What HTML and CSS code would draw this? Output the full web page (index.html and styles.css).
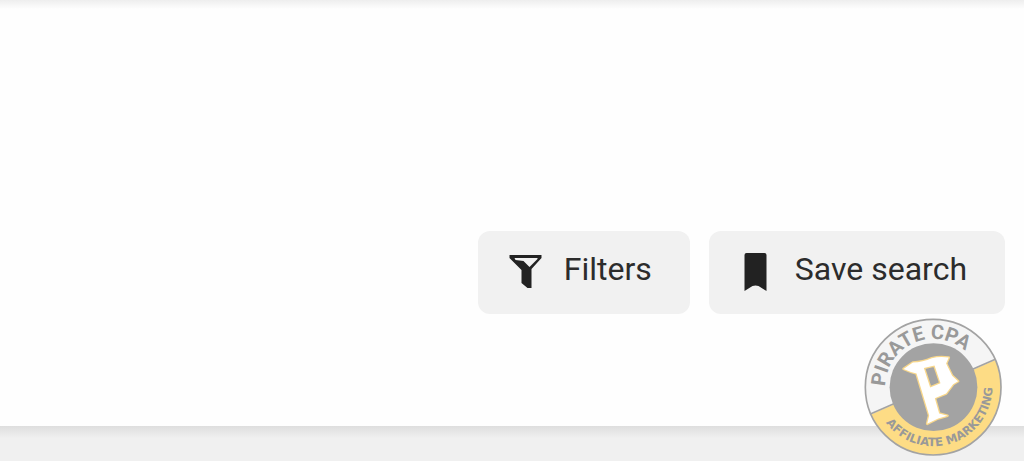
FILE: index.html
```
<!DOCTYPE html>
<html lang="en-US">
  <head>
    <meta charset="utf-8">
    <title>Search</title>
    <link rel="stylesheet" href="styles.css">
  </head>
  <body>
    <main class="toolbar">
      <button type="button" class="btn">
        <svg class="icon" viewBox="0 0 40 40" aria-hidden="true">
          <path fill-rule="evenodd" d="M3 4h32v3L25 18v19h-4l-6-5V19L3 7zM8 7l1 2 8 1 6 6 8-8V7z"/>
        </svg>
        <span>Filters</span>
      </button>
      <button type="button" class="btn">
        <svg class="icon" viewBox="0 0 40 40" aria-hidden="true">
          <path d="M9 2h18q2 0 2 2v36l-8-5q-3-1-6 0l-8 5V4q0-2 2-2z"/>
        </svg>
        <span>Save search</span>
      </button>
    </main>
    <footer class="strip"></footer>

    <svg class="logo" viewBox="13 17 415 415" role="img" aria-label="Pirate CPA Affiliate Marketing">
      <defs>
        <path id="arc-top" d="M77 237a145 145 0 1 1 289 0"/>
        <path id="arc-bottom" d="M54 163A178 178 0 1 0 388 163"/>
      </defs>
      <circle class="logo-ring" cx="221" cy="225" r="204"/>
      <path class="logo-gold" d="M34 307A204 204 0 0 0 408 143z"/>
      <path class="logo-line" d="M34 305L408 141"/>
      <circle class="logo-edge" cx="221" cy="225" r="204"/>
      <circle class="logo-disc" cx="222" cy="225" r="132"/>
      <path class="logo-letter" d="M132 170L160 151Q190 150 217 138Q240 132 268 136L260 154L278 191L296 207L281 216L260 244L226 258L239 304L264 311L236 319L203 335L209 310L171 184Q154 180 132 170zM193 167L212 226L243 213L225 160z"/>
      <text class="logo-name"><textPath href="#arc-top" startOffset="14">PIRATE CPA</textPath></text>
      <text class="logo-tag"><textPath href="#arc-bottom" startOffset="178">AFFILIATE MARKETING</textPath></text>
    </svg>
  </body>
</html>
```
FILE: styles.css
```
body {
  background-color: #fefefe;
  display: flex;
  flex-direction: column;
  font-family: Roboto, sans-serif;
  margin: 0;
  min-height: 100vh;
  position: relative;
}

.toolbar {
  align-items: flex-end;
  background: linear-gradient(#eee, #fefefe 9px);
  display: flex;
  flex: 1;
  gap: 19px;
  justify-content: flex-end;
  padding: 20px 19px 112px;
}

.btn {
  align-items: center;
  background-color: #f1f1f1;
  border: none;
  border-radius: 12px;
  color: #2c2c2c;
  cursor: pointer;
  display: flex;
  font: 32px/36px Roboto, sans-serif;
  gap: 17px;
  padding: 20px 38px 23px 28px;
}
.btn span { padding-bottom: 4px; }

.icon {
  fill: #222;
  height: 40px;
  width: 41px;
}

.strip {
  background: linear-gradient(#dedede, #f0f0f0 12px);
  height: 35px;
}

/* badge in the corner, over the strip */
.logo {
  bottom: 5px;
  height: 138px;
  position: absolute;
  right: 22px;
  width: 138px;
}
.logo-ring { fill: #f5f5f5; }
.logo-gold { fill: #fddc85; }
.logo-line,
.logo-edge {
  fill: none;
  stroke: #a3a3a3;
  stroke-width: 5px;
}
.logo-disc { fill: #a3a3a3; }
.logo-letter {
  fill: #fff;
  fill-rule: evenodd;
  paint-order: stroke;
  stroke: #f8d78b;
  stroke-linejoin: round;
  stroke-width: 8px;
}
.logo-name {
  fill: #999;
  font: bold 60px "Liberation Sans Narrow", Roboto, sans-serif;
}
.logo-tag {
  fill: #999;
  font: bold 35px "DejaVu Sans", sans-serif;
}
```
